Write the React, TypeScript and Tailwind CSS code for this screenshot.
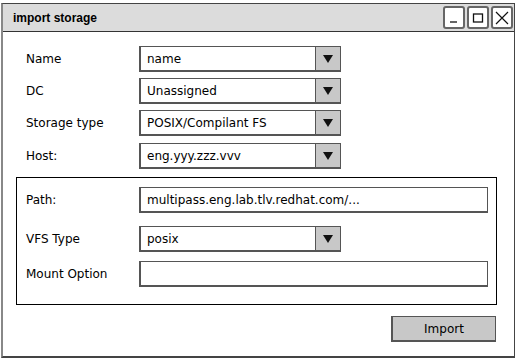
import React from "react";

const font = { fontFamily: '"Comic Sans MS", "DejaVu Sans", sans-serif' };

function Arrow() {
  return (
    <svg width="10" height="8" viewBox="0 0 10 8">
      <polygon points="0,0 10,0 5,8" fill="#111" />
    </svg>
  );
}

function Select({ value }: { value: string }) {
  return (
    <div className="flex h-[26px] w-[202px] border border-[#555] border-l-2 border-b-2 bg-white">
      <div className="flex-1 flex items-center pl-[6px] text-[12px] text-black">{value}</div>
      <div className="w-[25px] bg-[#c8c8c8] border-l border-[#555] flex items-center justify-center">
        <Arrow />
      </div>
    </div>
  );
}

function Input({ value }: { value: string }) {
  return (
    <div className="flex-1 h-[26px] border border-[#555] border-l-2 border-b-2 bg-white flex items-center pl-[6px] text-[12px] text-black">
      {value}
    </div>
  );
}

function Row({ label, children, className = "" }: { label: string; children: React.ReactNode; className?: string }) {
  return (
    <div className={"flex items-center " + className}>
      <div className="w-[113px] text-[12px] text-black">{label}</div>
      {children}
    </div>
  );
}

function WinBtn({ children }: { children: React.ReactNode }) {
  return (
    <div className="w-[22px] h-[23px] border-2 border-[#666] rounded-[3px] bg-white flex items-center justify-center">
      {children}
    </div>
  );
}

export default function App() {
  return (
    <div className="w-[519px] h-[362px] bg-white" style={font}>
      <div className="ml-[1px] mt-[3px] w-[514px] h-[355px] border border-[#444] border-l-2 border-l-[#888] border-b-2 flex flex-col">
        <div className="h-[28px] bg-[#dcdcdc] border-b border-[#333] flex items-center pl-[10px] pr-[1px]">
          <span className="text-[12px] font-bold text-black" style={{ fontFamily: '"Liberation Sans", Arial, sans-serif' }}>import storage</span>
          <div className="ml-auto flex gap-[2px]">
            <WinBtn>
              <svg width="12" height="12" viewBox="0 0 12 12"><line x1="2" y1="10" x2="9" y2="10" stroke="#111" strokeWidth="1.3" /></svg>
            </WinBtn>
            <WinBtn>
              <svg width="12" height="12" viewBox="0 0 12 12"><rect x="1.5" y="2" width="9" height="8" fill="none" stroke="#111" strokeWidth="1.3" /></svg>
            </WinBtn>
            <WinBtn>
              <svg width="14" height="14" viewBox="0 0 14 14"><path d="M1 1 L13 13 M13 1 L1 13" stroke="#111" strokeWidth="1.2" /></svg>
            </WinBtn>
          </div>
        </div>
        <div className="flex flex-col pt-[14px] pl-[23px]">
          <Row label="Name"><Select value="name" /></Row>
          <Row label="DC" className="mt-[6px]"><Select value="Unassigned" /></Row>
          <Row label="Storage type" className="mt-[6px]"><Select value="POSIX/Compilant FS" /></Row>
          <Row label="Host:" className="mt-[7px]"><Select value="eng.yyy.zzz.vvv" /></Row>
        </div>
        <div className="ml-[13px] mt-[8px] w-[481px] h-[128px] border border-black flex flex-col pt-[9px] pl-[9px] pr-[8px]">
          <Row label="Path:"><Input value="multipass.eng.lab.tlv.redhat.com/..." /></Row>
          <Row label="VFS Type" className="mt-[13px]"><Select value="posix" /></Row>
          <Row label="Mount Option" className="mt-[9px]"><Input value="" /></Row>
        </div>
        <div className="flex justify-end pr-[18px] mt-[11px]">
          <div className="w-[105px] h-[26px] bg-[#c8c8c8] border border-[#555] border-l-2 border-b-2 flex items-center justify-center text-[12px] text-black">
            Import
          </div>
        </div>
      </div>
    </div>
  );
}
